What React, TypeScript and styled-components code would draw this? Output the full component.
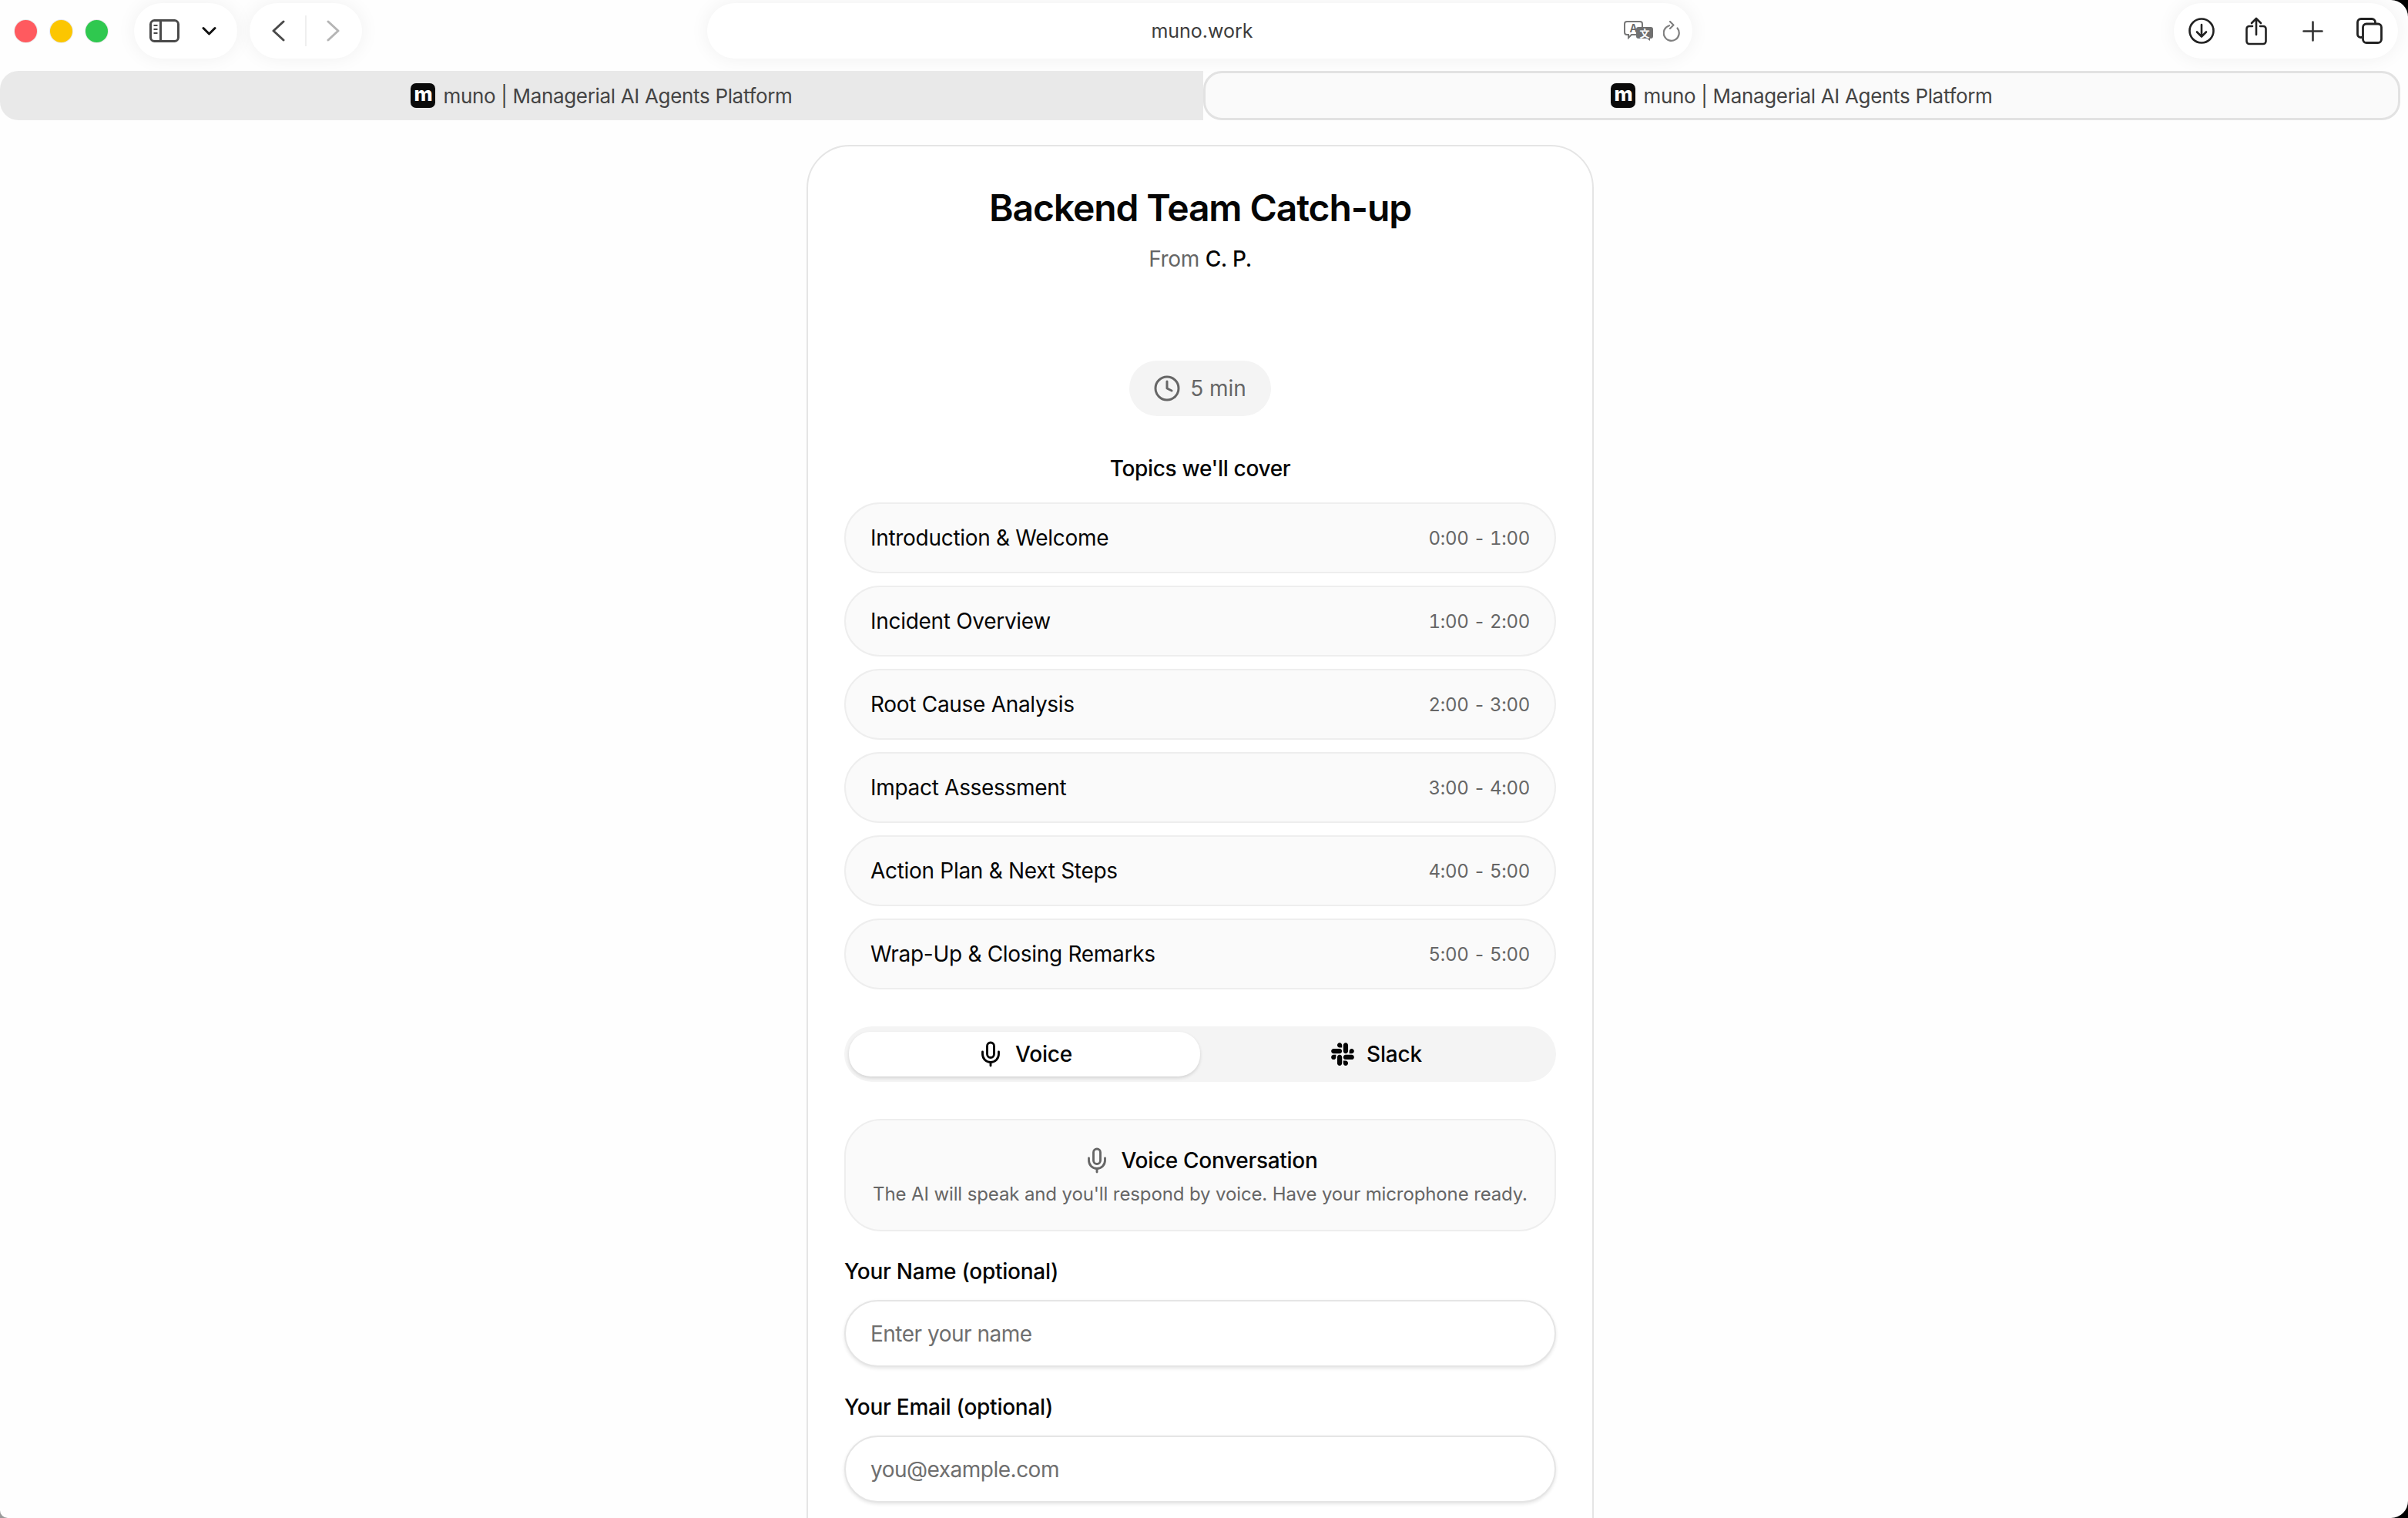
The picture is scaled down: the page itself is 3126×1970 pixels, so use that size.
import * as React from 'react'
import styled, { createGlobalStyle } from 'styled-components'
import { Clock, Mic } from 'lucide-react'
import { FaSlack } from 'react-icons/fa'

const GlobalStyle = createGlobalStyle`
  html, body {
    margin: 0;
    padding: 0;
    height: 1970px;
    overflow: hidden;
    background: linear-gradient(90deg, #9a9a9a 50%, #000 50%);
    font-family: Inter, "Liberation Sans", sans-serif;
    color: #050505;
  }
  * { box-sizing: border-box; }
`

const Window = styled.div`
  width: 3126px;
  height: 1970px;
  overflow: hidden;
  background: #fefefe;
  border-radius: 0 22px 22px 10px;
`

const Toolbar = styled.div`
  height: 92px;
  padding: 4px 13px 16px 19px;
  display: flex;
  align-items: stretch;
`

const Lights = styled.div`
  display: flex;
  align-items: center;
  gap: 17px;
  margin-right: 34px;
`

const Light = styled.span<{ $color: string }>`
  width: 29px;
  height: 29px;
  border-radius: 50%;
  background: ${p => p.$color};
  box-shadow: 0 0 0 1px rgba(0, 0, 0, 0.08);
`

const Pill = styled.div`
  display: flex;
  align-items: center;
  border-radius: 36px;
  background: #fff;
  box-shadow: 0 0 26px rgba(0, 0, 0, 0.06);
`

const SidebarPill = styled(Pill)`
  width: 134px;
  padding: 0 27px 0 20px;
  justify-content: space-between;
  margin-right: 16px;
`

const NavPill = styled(Pill)`
  width: 146px;
  padding: 0 29px;
  justify-content: space-between;
  margin-right: 448px;
`

const NavDivider = styled.span`
  width: 2px;
  height: 40px;
  background: #efefef;
`

const UrlPill = styled(Pill)`
  width: 1279px;
  padding-left: 6px;
  display: grid;
  grid-template-columns: 1fr auto 1fr;
  margin-right: 625px;
  font-size: 25px;
  color: #3c3c3c;
`

const UrlText = styled.span`
  letter-spacing: 0;
`

const UrlActions = styled.div`
  display: flex;
  align-items: center;
  justify-content: flex-end;
  gap: 13px;
  padding-right: 15px;
`

const ActionsPill = styled(Pill)`
  width: 291px;
  padding: 0 20px 0 19px;

  svg:nth-child(2) { margin-left: 40px; }
  svg:nth-child(3) { margin-left: 46px; }
  svg:nth-child(4) { margin-left: 43px; }
`

const TabBar = styled.div`
  height: 64px;
  margin-right: 10px;
  display: grid;
  grid-template-columns: 1562px 1fr;
`

const Tab = styled.div<{ $active?: boolean }>`
  display: flex;
  align-items: center;
  justify-content: center;
  gap: 10px;
  font-size: 26px;
  letter-spacing: -0.33px;
  color: #444;
  border-radius: ${p => (p.$active ? '24px' : '24px 0 0 24px')};
  background: ${p => (p.$active ? '#fafafa' : '#e9e9e9')};
  border: ${p => (p.$active ? '3px solid #e2e2e2' : 'none')};
`

const Favicon = styled.span`
  width: 32px;
  height: 32px;
  border-radius: 7px;
  background: #0a0a0a;
  color: #fff;
  font-size: 26px;
  font-weight: 800;
  line-height: 27px;
  text-align: center;
`

const Content = styled.div`
  width: 3116px;
  padding-top: 32px;
`

const Card = styled.main`
  width: 1022px;
  height: 1900px;
  margin: 0 auto;
  padding: 48px 47px;
  border: 2px solid #e5e5e5;
  border-radius: 56px;
  background: #fff;
  display: flex;
  flex-direction: column;
`

const Title = styled.h1`
  margin: 0;
  font-size: 48px;
  line-height: 64px;
  font-weight: 600;
  letter-spacing: -1.1px;
  text-align: center;
`

const From = styled.p`
  margin: 14px 0 0;
  font-size: 28px;
  line-height: 40px;
  letter-spacing: -0.3px;
  color: #666;
  text-align: center;

  strong {
    font-weight: 500;
    color: #050505;
  }
`

const Duration = styled.div`
  align-self: center;
  height: 72px;
  margin-top: 112px;
  padding: 0 32px 0 31px;
  display: flex;
  align-items: center;
  gap: 12px;
  border-radius: 36px;
  background: #f4f4f4;
  font-size: 28px;
  color: #666;
`

const TopicsHeading = styled.h2`
  margin: 48px 0 24px;
  font-size: 28px;
  line-height: 40px;
  font-weight: 500;
  letter-spacing: -0.33px;
  text-align: center;
`

const TopicList = styled.ul`
  margin: 0;
  padding: 0;
  list-style: none;
  display: flex;
  flex-direction: column;
  gap: 16px;
`

const Topic = styled.li`
  height: 92px;
  padding: 0 32px;
  display: flex;
  align-items: center;
  justify-content: space-between;
  border: 2px solid #eeeeee;
  border-radius: 46px;
  background: #fafafa;
  font-size: 28px;
  letter-spacing: -0.3px;
`

const TopicTime = styled.span`
  font-size: 24px;
  color: #666;
  letter-spacing: -0.3px;
  font-variant-numeric: tabular-nums;
`

const ModeSwitch = styled.div`
  height: 72px;
  margin-top: 48px;
  padding: 7px 6px;
  display: grid;
  grid-template-columns: 456px 1fr;
  border-radius: 36px;
  background: #f4f4f4;
`

const ModeButton = styled.div<{ $active?: boolean }>`
  display: flex;
  align-items: center;
  justify-content: center;
  gap: 14px;
  font-size: 28px;
  font-weight: 500;
  letter-spacing: -0.2px;
  border-radius: 28px;
  background: ${p => (p.$active ? '#fff' : 'transparent')};
  box-shadow: ${p => (p.$active ? '0 2px 4px rgba(0, 0, 0, 0.14)' : 'none')};
`

const ModeInfo = styled.section`
  height: 146px;
  margin-top: 48px;
  padding-top: 32px;
  border: 2px solid #eeeeee;
  border-radius: 48px;
  background: #fafafa;
  text-align: center;
`

const ModeInfoTitle = styled.div`
  display: flex;
  align-items: center;
  justify-content: center;
  gap: 14px;
  font-size: 28px;
  line-height: 40px;
  font-weight: 500;
  letter-spacing: -0.3px;

  svg {
    color: #666;
  }
`

const ModeInfoText = styled.p`
  margin: 8px 0 0;
  font-size: 24px;
  line-height: 32px;
  color: #666;
  letter-spacing: -0.12px;
`

const Field = styled.label`
  margin-top: 32px;
  display: flex;
  flex-direction: column;
  gap: 17px;
  font-size: 28px;
  line-height: 40px;
  font-weight: 500;
  letter-spacing: -0.25px;
`

const TextInput = styled.input`
  height: 87px;
  padding: 0 32px;
  border: 2px solid #e5e5e5;
  border-radius: 44px;
  background: #fff;
  box-shadow: 0 2px 4px rgba(0, 0, 0, 0.1);
  font: 400 28px Inter, "Liberation Sans", sans-serif;
  letter-spacing: -0.5px;
  outline: none;

  &::placeholder {
    color: #6f6f6f;
    opacity: 1;
  }
`

const SidebarIcon = () => (
  <svg width="39" height="30" viewBox="0 0 39 30" fill="none" stroke="#4a4a4a" strokeWidth="3">
    <rect x="1.5" y="1.5" width="36" height="27" rx="5" />
    <path d="M14.5 1.5v27" />
    <path d="M5.5 8h5M5.5 13h5M5.5 18h5" strokeWidth="2" />
  </svg>
)

const ChevronDown = () => (
  <svg width="19" height="12" viewBox="0 0 19 12" fill="none" stroke="#111" strokeWidth="3" strokeLinecap="round" strokeLinejoin="round">
    <path d="M2 2.5l7.5 7.5L17 2.5" />
  </svg>
)

const ChevronSide = ({ dir, color }: { dir: 'left' | 'right'; color: string }) => (
  <svg width="17" height="28" viewBox="0 0 17 28" fill="none" stroke={color} strokeWidth="3" strokeLinecap="round" strokeLinejoin="round">
    <path d={dir === 'left' ? 'M15 2L2 14l13 12' : 'M2 2l13 12L2 26'} />
  </svg>
)

const TranslateIcon = () => (
  <svg width="38" height="26" viewBox="0 0 38 26">
    <path d="M4 1h17a3 3 0 0 1 3 3v11a3 3 0 0 1-3 3H10l-4 4v-4H4a3 3 0 0 1-3-3V4a3 3 0 0 1 3-3z" fill="#fff" stroke="#777" strokeWidth="2" />
    <text x="12.5" y="15" fontSize="14" fontWeight="600" textAnchor="middle" fill="#666" fontFamily="Inter, sans-serif">A</text>
    <path d="M19 8h16a3 3 0 0 1 3 3v9a3 3 0 0 1-3 3h-1v3l-4-3H19a3 3 0 0 1-3-3v-9a3 3 0 0 1 3-3z" fill="#707070" />
    <text x="27" y="21" fontSize="13" fontWeight="600" textAnchor="middle" fill="#fff" fontFamily="'Noto Sans CJK SC', sans-serif">文</text>
  </svg>
)

const ReloadIcon = () => (
  <svg width="23" height="27" viewBox="0 0 23 27" fill="none" stroke="#808080" strokeWidth="2.2" strokeLinecap="round" strokeLinejoin="round">
    <path d="M8 6.2A10 10 0 1 0 18.5 9.5" />
    <path d="M9 1l4.5 4.5L9 10" />
  </svg>
)

const DownloadIcon = () => (
  <svg width="34" height="34" viewBox="0 0 34 34" fill="none" stroke="#222" strokeWidth="2.6" strokeLinecap="round" strokeLinejoin="round">
    <circle cx="17" cy="17" r="15.5" />
    <path d="M17 9v15M11 18.5l6 6 6-6" />
  </svg>
)

const ShareIcon = () => (
  <svg width="28" height="37" viewBox="0 0 28 37" fill="none" stroke="#222" strokeWidth="2.6" strokeLinecap="round" strokeLinejoin="round">
    <path d="M9 12H5a3.5 3.5 0 0 0-3.5 3.5v16A3.5 3.5 0 0 0 5 35h18a3.5 3.5 0 0 0 3.5-3.5v-16A3.5 3.5 0 0 0 23 12h-4" />
    <path d="M14 23V2M8 8l6-6 6 6" />
  </svg>
)

const PlusIcon = () => (
  <svg width="27" height="27" viewBox="0 0 27 27" stroke="#333" strokeWidth="2.6" strokeLinecap="round">
    <path d="M13.5 1.5v24M1.5 13.5h24" />
  </svg>
)

const TabsIcon = () => (
  <svg width="34" height="34" viewBox="0 0 34 34" fill="none" stroke="#222" strokeWidth="2.8" strokeLinejoin="round">
    <path d="M7 25.5H6a4 4 0 0 1-4.5-4V6A4.5 4.5 0 0 1 6 1.5h14a4.5 4.5 0 0 1 4.5 4.5v1" />
    <rect x="8.5" y="8" width="24" height="24.5" rx="4.5" />
  </svg>
)

const topics = [
  { name: 'Introduction & Welcome', time: '0:00 - 1:00' },
  { name: 'Incident Overview', time: '1:00 - 2:00' },
  { name: 'Root Cause Analysis', time: '2:00 - 3:00' },
  { name: 'Impact Assessment', time: '3:00 - 4:00' },
  { name: 'Action Plan & Next Steps', time: '4:00 - 5:00' },
  { name: 'Wrap-Up & Closing Remarks', time: '5:00 - 5:00' },
]

const tabTitle = 'muno | Managerial AI Agents Platform'

const App = () => (
  <Window>
    <GlobalStyle />
    <Toolbar>
      <Lights>
        <Light $color="#ff5a5f" />
        <Light $color="#fcc600" />
        <Light $color="#2fc84f" />
      </Lights>
      <SidebarPill>
        <SidebarIcon />
        <ChevronDown />
      </SidebarPill>
      <NavPill>
        <ChevronSide dir="left" color="#4a4a4a" />
        <NavDivider />
        <ChevronSide dir="right" color="#b5b5b5" />
      </NavPill>
      <UrlPill>
        <span />
        <UrlText>muno.work</UrlText>
        <UrlActions>
          <TranslateIcon />
          <ReloadIcon />
        </UrlActions>
      </UrlPill>
      <ActionsPill>
        <DownloadIcon />
        <ShareIcon />
        <PlusIcon />
        <TabsIcon />
      </ActionsPill>
    </Toolbar>
    <TabBar>
      <Tab>
        <Favicon>m</Favicon>
        {tabTitle}
      </Tab>
      <Tab $active>
        <Favicon>m</Favicon>
        {tabTitle}
      </Tab>
    </TabBar>
    <Content>
      <Card>
        <Title>Backend Team Catch-up</Title>
        <From>
          From <strong>C. P.</strong>
        </From>
        <Duration>
          <Clock size={36} strokeWidth={2} />5 min
        </Duration>
        <TopicsHeading>Topics we'll cover</TopicsHeading>
        <TopicList>
          {topics.map(topic => (
            <Topic key={topic.name}>
              {topic.name}
              <TopicTime>{topic.time}</TopicTime>
            </Topic>
          ))}
        </TopicList>
        <ModeSwitch>
          <ModeButton $active>
            <Mic size={36} strokeWidth={1.9} />
            Voice
          </ModeButton>
          <ModeButton>
            <FaSlack size={34} />
            Slack
          </ModeButton>
        </ModeSwitch>
        <ModeInfo>
          <ModeInfoTitle>
            <Mic size={36} strokeWidth={1.9} />
            Voice Conversation
          </ModeInfoTitle>
          <ModeInfoText>The AI will speak and you'll respond by voice. Have your microphone ready.</ModeInfoText>
        </ModeInfo>
        <Field>
          Your Name (optional)
          <TextInput placeholder="Enter your name" />
        </Field>
        <Field>
          Your Email (optional)
          <TextInput placeholder="you@example.com" />
        </Field>
      </Card>
    </Content>
  </Window>
)

export default App
